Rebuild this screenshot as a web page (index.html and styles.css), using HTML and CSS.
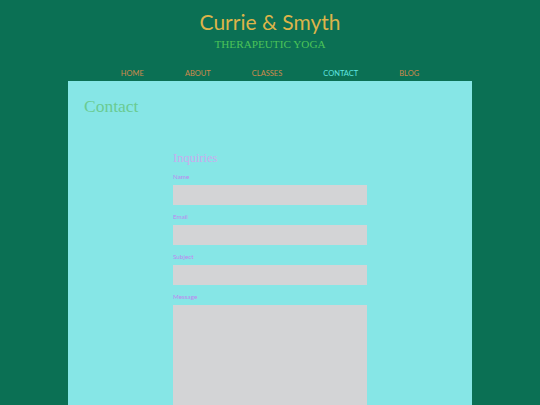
FILE: index.html
```html
<!DOCTYPE html>
<html>
<head>
<meta charset="utf-8">
<link rel="stylesheet" href="styles.css">
</head>
<body>
<header class="site-header">
  <h1 class="brand">Currie &amp; Smyth</h1>
  <p class="tagline">THERAPEUTIC YOGA</p>
  <nav class="nav">
    <a class="nav-link" href="#">HOME</a>
    <a class="nav-link" href="#">ABOUT</a>
    <a class="nav-link" href="#">CLASSES</a>
    <a class="nav-link active" href="#">CONTACT</a>
    <a class="nav-link" href="#">BLOG</a>
  </nav>
</header>
<main class="panel">
  <h2 class="page-title">Contact</h2>
  <form class="form">
    <h3 class="form-title">Inquiries</h3>
    <label class="label">Name</label>
    <div class="field"></div>
    <label class="label">Email</label>
    <div class="field"></div>
    <label class="label">Subject</label>
    <div class="field"></div>
    <label class="label">Message</label>
    <div class="field area"></div>
  </form>
</main>
</body>
</html>
```
FILE: styles.css
```css
html, body {
  margin: 0;
  padding: 0;
}
body {
  background: #0b7054;
  font-family: "Lato", "Liberation Sans", sans-serif;
}
.site-header {
  text-align: center;
  padding-top: 9px;
}
.brand {
  margin: 0;
  font-family: "Lato", sans-serif;
  font-weight: 400;
  font-size: 21px;
  line-height: 26px;
  color: #dcb44a;
}
.tagline {
  margin: 2px 0 0;
  font-family: "Liberation Serif", serif;
  font-size: 11.2px;
  line-height: 14px;
  color: #4cc458;
}
.nav {
  display: flex;
  justify-content: center;
  gap: 41px;
  margin-top: 17px;
  padding-bottom: 1px;
}
.nav-link {
  font-size: 7.5px;
  line-height: 12px;
  color: #cf8a4c;
  text-decoration: none;
}
.nav-link.active {
  color: #5fe6e0;
}
.panel {
  width: 388px;
  margin: 0 auto;
  padding: 15px 0 0 16px;
  background: #86e6e6;
}
.page-title {
  margin: 0;
  font-family: "Liberation Serif", serif;
  font-weight: 400;
  font-size: 17.5px;
  line-height: 20px;
  color: #6acb92;
}
.form {
  width: 194px;
  margin: 34px 0 0 89px;
}
.form-title {
  margin: 0 0 7px;
  font-family: "Liberation Serif", serif;
  font-weight: 400;
  font-size: 12.5px;
  line-height: 16px;
  color: #caacee;
}
.label {
  display: block;
  font-size: 6.3px;
  line-height: 8px;
  color: #c085f0;
  margin-bottom: 4px;
}
.field {
  height: 20px;
  background: #d3d4d6;
  margin-bottom: 8px;
}
.field.area {
  height: 100px;
  margin-bottom: 0;
}
```
